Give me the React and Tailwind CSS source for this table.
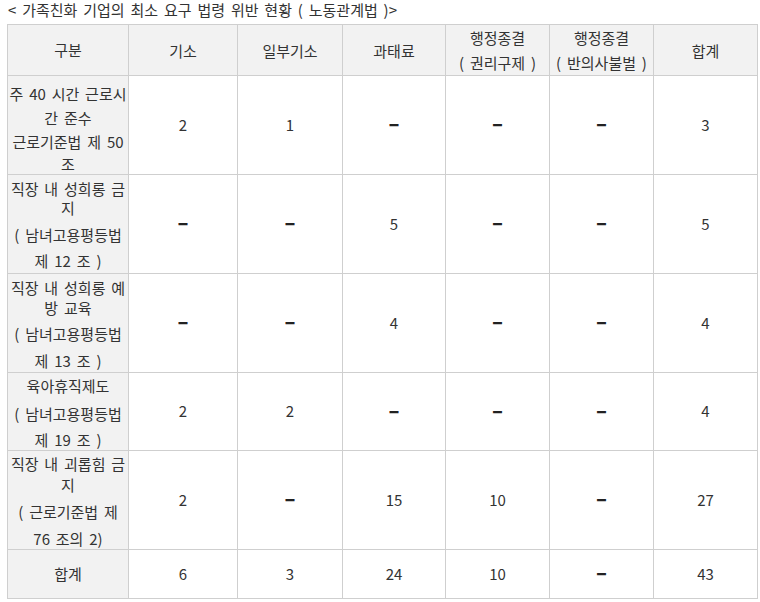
const columns = ["기소", "일부기소", "과태료", ["행정종결", "( 권리구제 )"], ["행정종결", "( 반의사불벌 )"], "합계"];

// label lines: [text, height]
const rows = [
  {
    pt: "pt-[5px]",
    label: [["주 40 시간 근로시", "h-[24px]"], ["간 준수", "h-[24px]"], ["근로기준법 제 50", "h-[24px]"], ["조", "h-[21px]"]],
    values: ["2", "1", "-", "-", "-", "3"],
  },
  {
    pt: "pt-[4px]",
    label: [["직장 내 성희롱 금", "h-[19px]"], ["지", "h-[19px]"], ["( 남녀고용평등법", "h-[35px]"], ["제 12 조 )", "h-[17px]"]],
    values: ["-", "-", "5", "-", "-", "5"],
  },
  {
    pt: "pt-[4px]",
    label: [["직장 내 성희롱 예", "h-[18px]"], ["방 교육", "h-[22px]"], ["( 남녀고용평등법", "h-[30px]"], ["제 13 조 )", "h-[24px]"]],
    values: ["-", "-", "4", "-", "-", "4"],
  },
  {
    pt: "pt-0",
    label: [["육아휴직제도", "h-[24px]"], ["( 남녀고용평등법", "h-[32px]"], ["제 19 조 )", "h-[20px]"]],
    values: ["2", "2", "-", "-", "-", "4"],
  },
  {
    pt: "pt-[2px]",
    label: [["직장 내 괴롭힘 금", "h-[20px]"], ["지", "h-[22px]"], ["( 근로기준법 제", "h-[32px]"], ["76 조의 2)", "h-[22px]"]],
    values: ["2", "-", "15", "10", "-", "27"],
  },
];

const rowHeights = ["h-[97px]", "h-[99px]", "h-[98px]", "h-[78px]", "h-[98px]"];

function Value({ v }) {
  if (v === "-") {
    return <span className="font-black text-[20px] leading-none text-[#222]">–</span>;
  }
  return <span>{v}</span>;
}

export default function App() {
  return (
    <div className="w-[760px] h-[602px] bg-white text-[#333] text-[15px] [word-spacing:2.5px] overflow-hidden" style={{ fontFamily: '"Noto Sans CJK KR", "Noto Sans", sans-serif' }}>
      <div className="h-[24px] pl-[8px] leading-[20px]">&lt; 가족친화 기업의 최소 요구 법령 위반 현황 ( 노동관계법 )&gt;</div>
      <table className="ml-[7px] w-[750px] table-fixed border-collapse border border-[#cfcfcf]">
        <colgroup>
          <col className="w-[121px]" />
          <col className="w-[109px]" />
          <col className="w-[105px]" />
          <col className="w-[103px]" />
          <col className="w-[104px]" />
          <col className="w-[104px]" />
          <col className="w-[104px]" />
        </colgroup>
        <thead>
          <tr className="h-[49px] bg-[#f2f2f2]">
            <th className="border border-[#cfcfcf] p-0 font-normal text-center align-middle">구분</th>
            {columns.map((c, i) => (
              <th key={i} className="border border-[#cfcfcf] p-0 font-normal text-center align-middle leading-[25px]">
                {Array.isArray(c) ? (
                  <div className="flex flex-col items-center">
                    <span className="whitespace-nowrap">{c[0]}</span>
                    <span className="whitespace-nowrap">{c[1]}</span>
                  </div>
                ) : (
                  c
                )}
              </th>
            ))}
          </tr>
        </thead>
        <tbody>
          {rows.map((r, ri) => (
            <tr key={ri} className={rowHeights[ri]}>
              <td className={`border border-[#cfcfcf] bg-[#f2f2f2] p-0 align-top ${r.pt}`}>
                <div className="flex flex-col">
                  {r.label.map(([t, h], li) => (
                    <div key={li} className={`${h} flex items-center justify-center whitespace-nowrap leading-none`}>
                      {t}
                    </div>
                  ))}
                </div>
              </td>
              {r.values.map((v, vi) => (
                <td key={vi} className="border border-[#cfcfcf] p-0 text-center align-middle">
                  <Value v={v} />
                </td>
              ))}
            </tr>
          ))}
          <tr className="h-[49px]">
            <td className="border border-[#cfcfcf] bg-[#f2f2f2] p-0 text-center align-middle">합계</td>
            {["6", "3", "24", "10", "-", "43"].map((v, vi) => (
              <td key={vi} className="border border-[#cfcfcf] p-0 text-center align-middle">
                <Value v={v} />
              </td>
            ))}
          </tr>
        </tbody>
      </table>
    </div>
  );
}
